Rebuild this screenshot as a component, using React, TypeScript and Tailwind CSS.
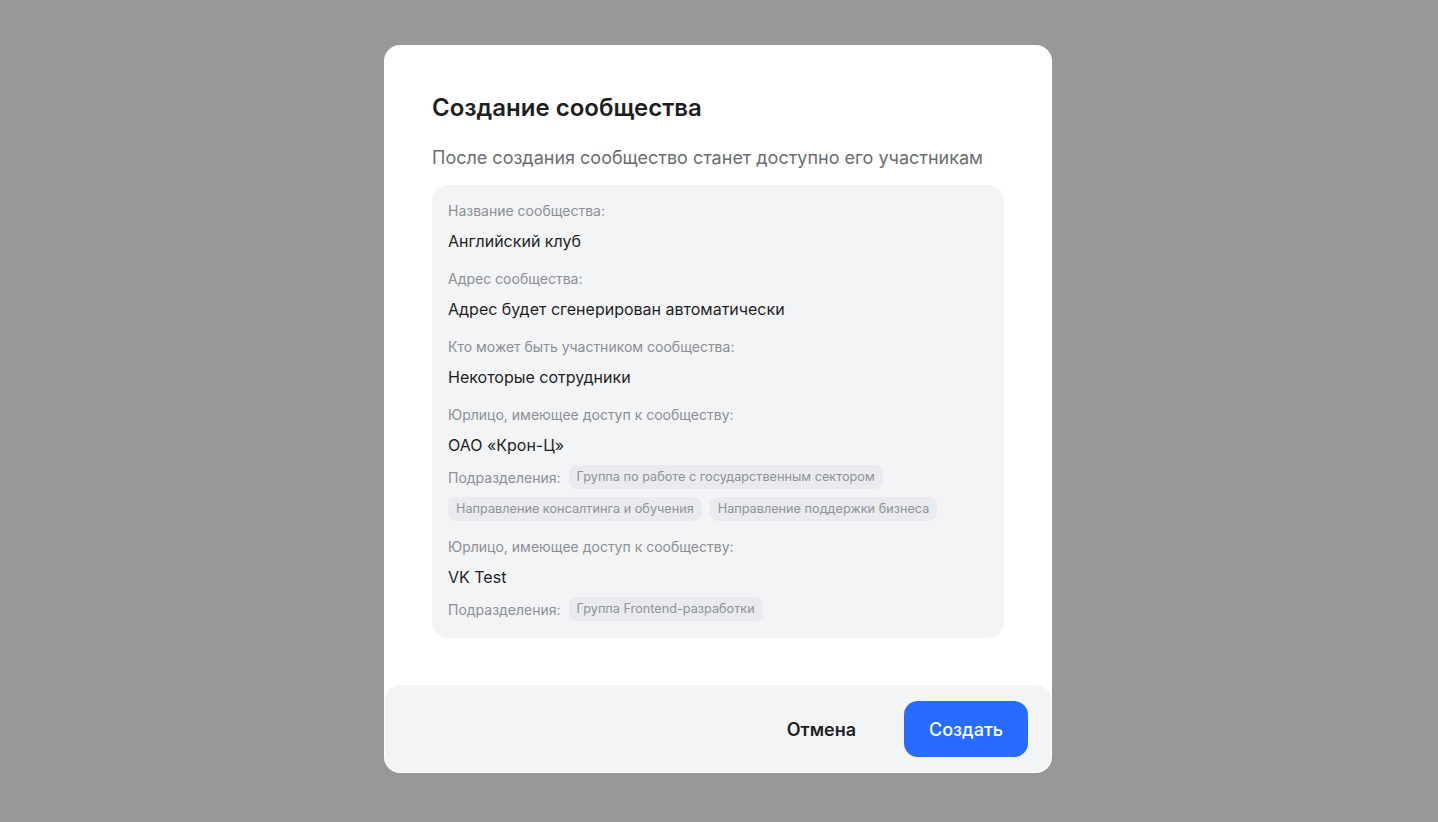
import React from 'react';

const font = { fontFamily: 'Inter, "Noto Sans", sans-serif' };

interface Entity {
  name: string;
  units: string[];
}

const entities: Entity[] = [
  {
    name: 'ОАО «Крон-Ц»',
    units: [
      'Группа по работе с государственным сектором',
      'Направление консалтинга и обучения',
      'Направление поддержки бизнеса',
    ],
  },
  { name: 'VK Test', units: ['Группа Frontend-разработки'] },
];

const Label: React.FC<{ children: React.ReactNode }> = ({ children }) => (
  <div className="text-[14px] leading-[20px] text-[#8c8f94]">{children}</div>
);

const Value: React.FC<{ children: React.ReactNode }> = ({ children }) => (
  <div className="mt-[10px] text-[16px] leading-[20px] text-[#1f1f1f]">{children}</div>
);

const Chip: React.FC<{ text: string }> = ({ text }) => (
  <span className="inline-flex h-6 items-center rounded-[8px] bg-[#e9ebee] px-2 text-[12.7px] text-[#8f9297]">
    {text}
  </span>
);

export default function App() {
  return (
    <div className="flex h-[822px] w-full items-start justify-center bg-[#989898] pt-[45px]" style={font}>
      <div className="mr-[2px] flex h-[728px] w-[668px] flex-col rounded-[16px] bg-white p-[1px]">
        <div className="flex-1 px-[47px] pt-[47px]">
          <h2 className="text-[24px] font-semibold leading-[30px] text-[#1f1f1f]">Создание сообщества</h2>
          <p className="mt-[23px] text-[18px] leading-[24px] text-[#6a6d72]">
            После создания сообщество станет доступно его участникам
          </p>
          <div className="mt-[15px] rounded-[16px] bg-[#f3f4f6] px-4 pb-[17px] pt-[16px]">
            <Label>Название сообщества:</Label>
            <Value>Английский клуб</Value>
            <div className="mt-[18px]">
              <Label>Адрес сообщества:</Label>
              <Value>Адрес будет сгенерирован автоматически</Value>
            </div>
            <div className="mt-[18px]">
              <Label>Кто может быть участником сообщества:</Label>
              <Value>Некоторые сотрудники</Value>
            </div>
            {entities.map((e, i) => (
              <div key={e.name} className={i === 0 ? 'mt-[18px]' : 'mt-[16px]'}>
                <Label>Юрлицо, имеющее доступ к сообществу:</Label>
                <Value>{e.name}</Value>
                <div className="mt-[10px] flex flex-wrap items-center gap-x-2 gap-y-2">
                  <span className="text-[14px] text-[#8c8f94]">Подразделения:</span>
                  {e.units.map((u) => (
                    <Chip key={u} text={u} />
                  ))}
                </div>
              </div>
            ))}
          </div>
        </div>
        <div className="flex h-[87px] items-center justify-end gap-6 rounded-[16px] bg-[#f3f4f6] pr-[23px]">
          <button className="h-14 rounded-[14px] px-6 pt-[2px] text-[18px] font-semibold text-[#1f1f1f]">Отмена</button>
          <button className="h-14 w-[124px] rounded-[14px] bg-[#276cff] pt-[2px] text-[18px] font-medium text-white">
            Создать
          </button>
        </div>
      </div>
    </div>
  );
}
